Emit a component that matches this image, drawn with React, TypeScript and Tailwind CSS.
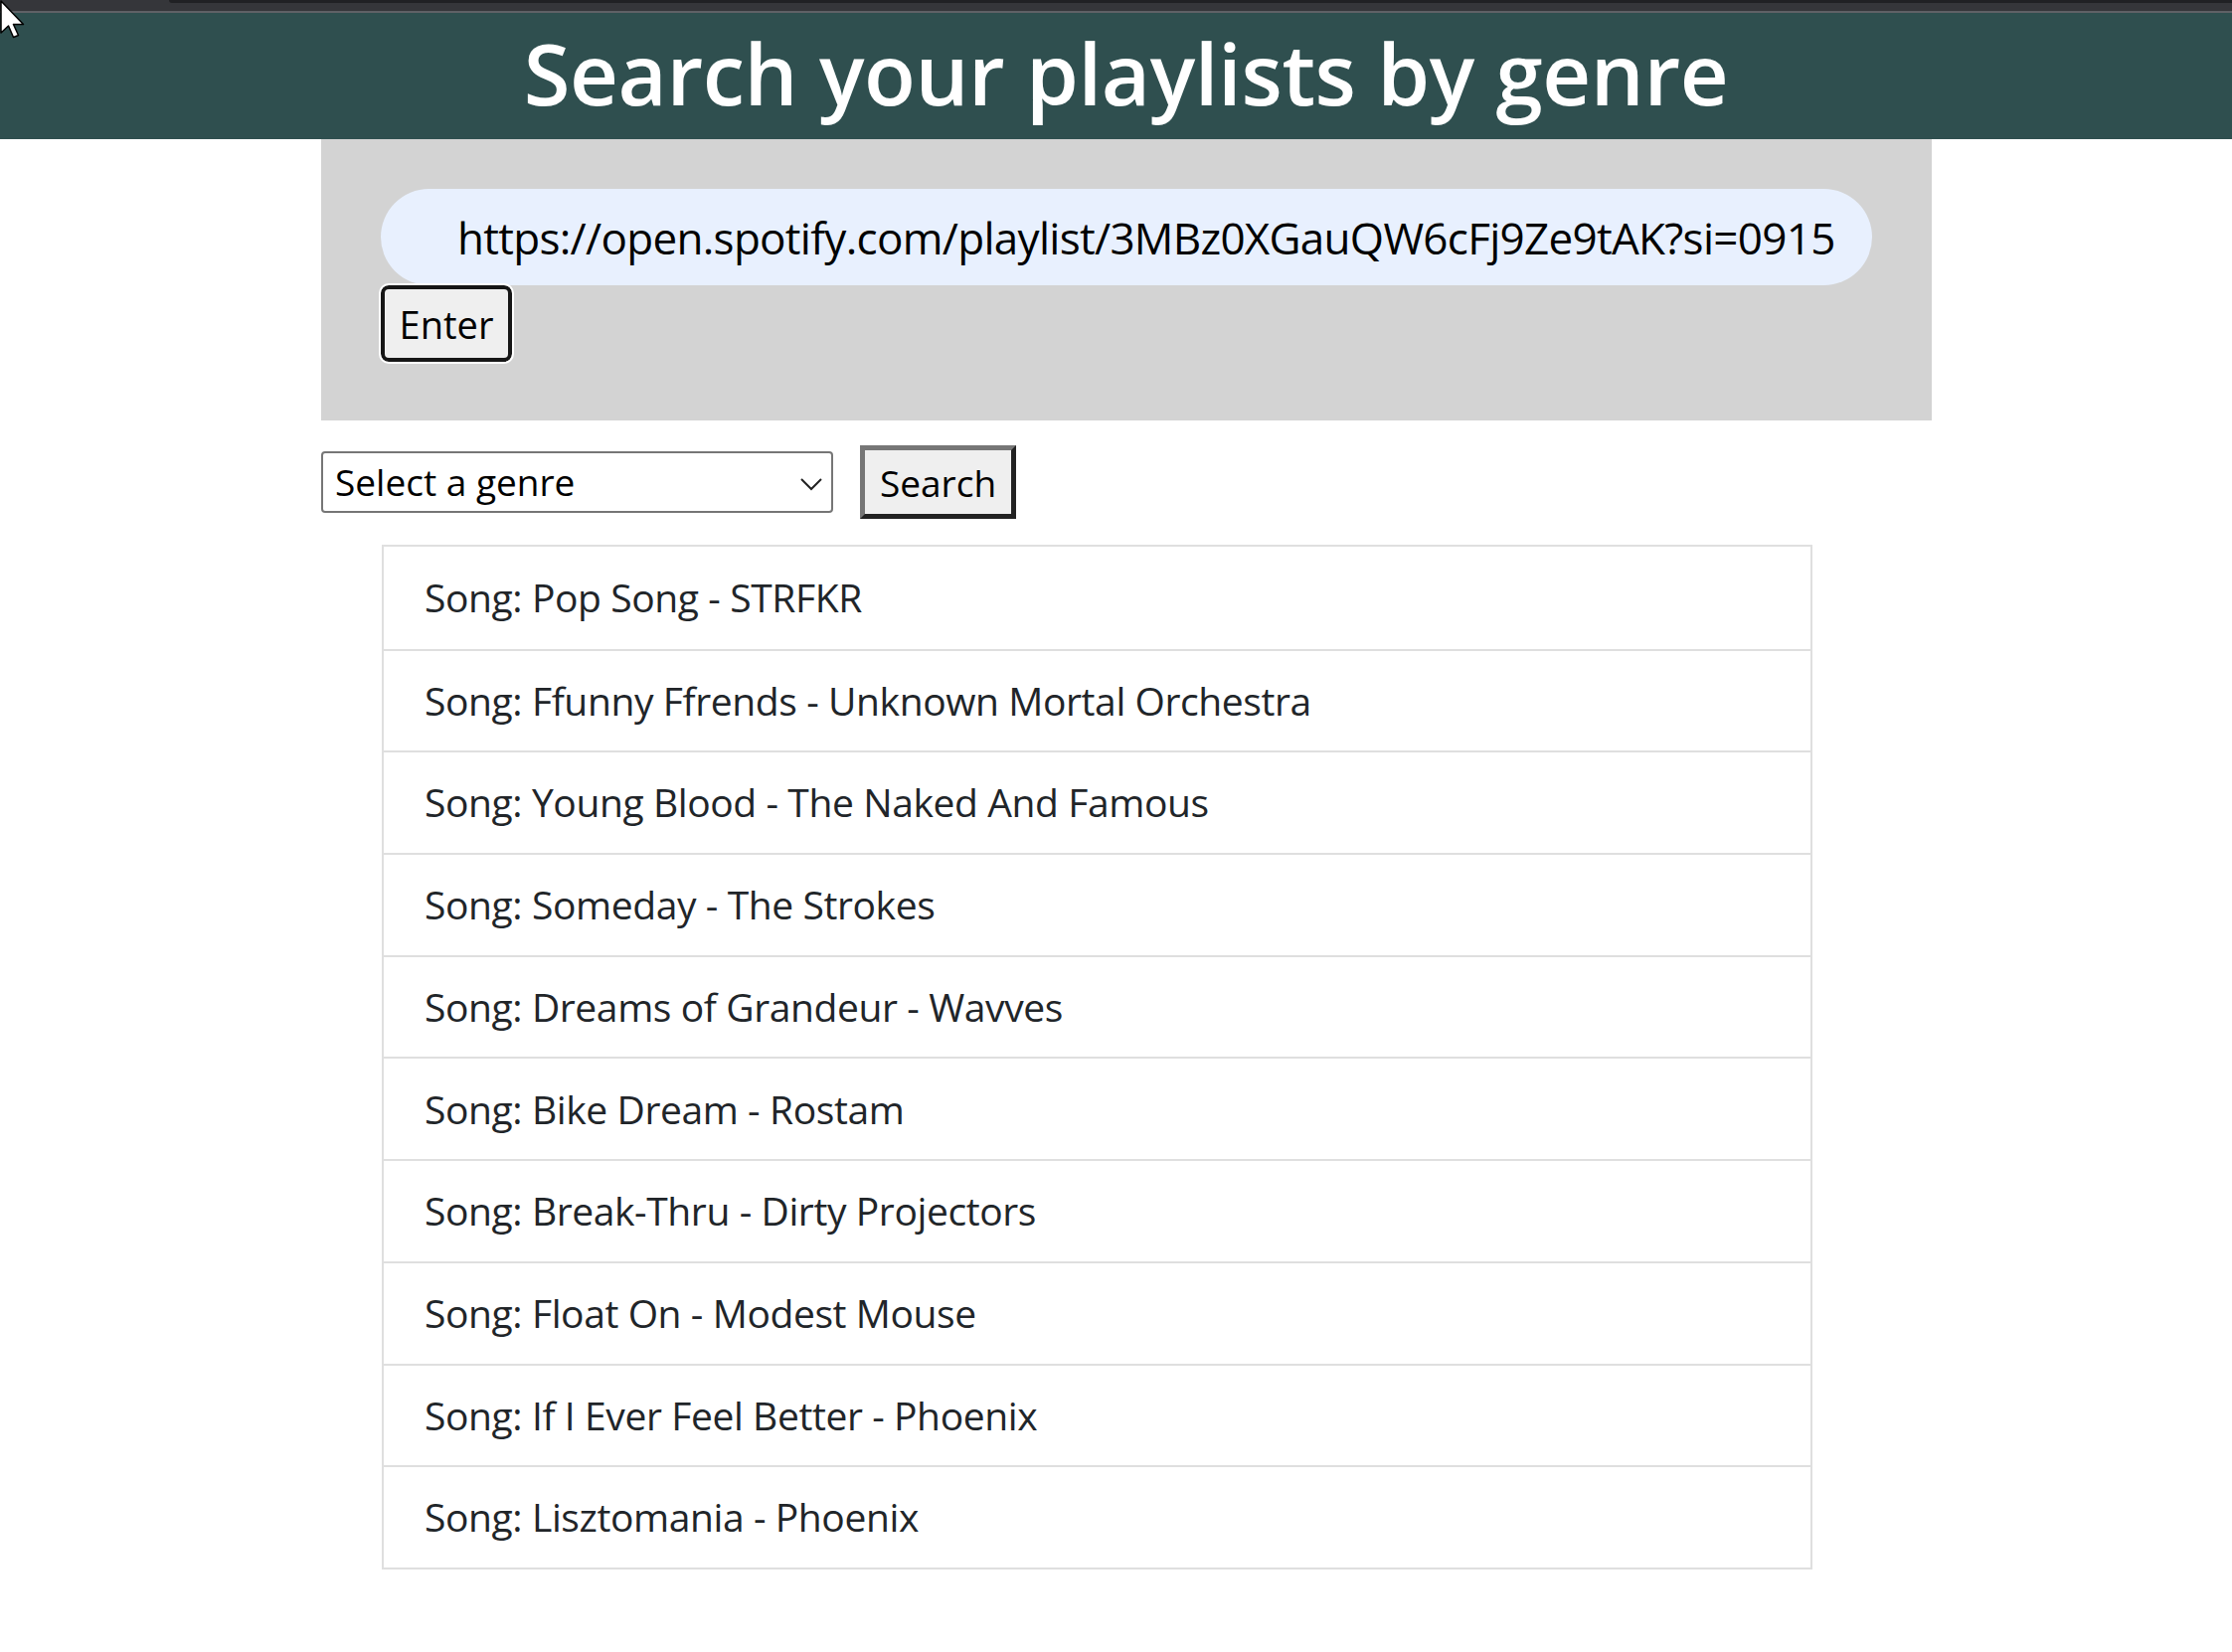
import React from 'react'

const songs = [
  'Pop Song - STRFKR',
  'Ffunny Ffrends - Unknown Mortal Orchestra',
  'Young Blood - The Naked And Famous',
  'Someday - The Strokes',
  'Dreams of Grandeur - Wavves',
  'Bike Dream - Rostam',
  'Break-Thru - Dirty Projectors',
  'Float On - Modest Mouse',
  'If I Ever Feel Better - Phoenix',
  'Lisztomania - Phoenix',
]

const Cursor = () => (
  <svg className="absolute left-0 top-0" width="26" height="40" viewBox="0 0 26 40">
    <path
      d="M1 1 L1 33 L8.5 26 L13.5 37.5 L18.5 35.5 L13.5 24.5 L23.5 24.5 Z"
      fill="#ffffff"
      stroke="#000000"
      strokeWidth="1.5"
      strokeLinejoin="round"
    />
  </svg>
)

export default function App() {
  return (
    <div className="relative min-h-screen bg-white font-['Open_Sans',_'Noto_Sans',_sans-serif]">
      <div className="relative h-[11px] bg-[#35363a]">
        <div className="absolute left-[170px] right-0 top-0 h-[3px] rounded-bl-[6px] bg-[#202124]" />
      </div>
      <div className="h-[2px] bg-[#5f6166]" />
      <header className="flex h-[127px] items-center justify-center bg-[#2f4f4f]">
        <h1 className="pl-[20px] pb-[6px] text-[85px] font-semibold leading-none tracking-[-0.4px] text-white">
          Search your playlists by genre
        </h1>
      </header>

      <div className="ml-[323px] w-[1620px] bg-[#d3d3d3] pb-[59px] pl-[60px] pt-[50px]">
        <input
          readOnly
          value="https://open.spotify.com/playlist/3MBz0XGauQW6cFj9Ze9tAK?si=0915"
          className="block h-[97px] w-[1500px] rounded-full bg-[#e8f0fe] pl-[77px] pr-[20px] text-[44px] tracking-[-0.7px] text-black outline-none"
        />
        <button className="h-[77px] w-[132px] rounded-[8px] border-[4px] border-[#161616] bg-[#efefef] text-[38px] leading-none text-black outline outline-[2px] outline-white">
          Enter
        </button>
      </div>

      <div className="ml-[323px] mt-[25px] flex items-center gap-[27px]">
        <div className="relative flex h-[62px] w-[515px] items-center rounded-[4px] border-[2px] border-[#767676] bg-white pl-[12px] text-[37px] text-black">
          Select a genre
          <svg className="absolute right-[8px] top-[24px]" width="24" height="14" viewBox="0 0 24 14">
            <path d="M2 2 L12 12 L22 2" fill="none" stroke="#222" strokeWidth="2" />
          </svg>
        </div>
        <button className="h-[74px] w-[157px] border-[5px] border-b-[#222222] border-l-[#767676] border-r-[#222222] border-t-[#767676] bg-[#efefef] text-[37px] leading-none text-black">
          Search
        </button>
      </div>

      <ul className="ml-[384px] mt-[26px] w-[1439px] border-[2px] border-[#dfdfdf]">
        {songs.map((song, idx) => (
          <li
            key={song}
            className={`flex h-[102.7px] items-center pl-[41px] text-[39px] tracking-[-0.4px] text-[#212529] ${idx > 0 ? 'border-t-[2px] border-[#dfdfdf]' : ''}`}
          >
            Song: {song}
          </li>
        ))}
      </ul>

      <Cursor />
    </div>
  )
}
